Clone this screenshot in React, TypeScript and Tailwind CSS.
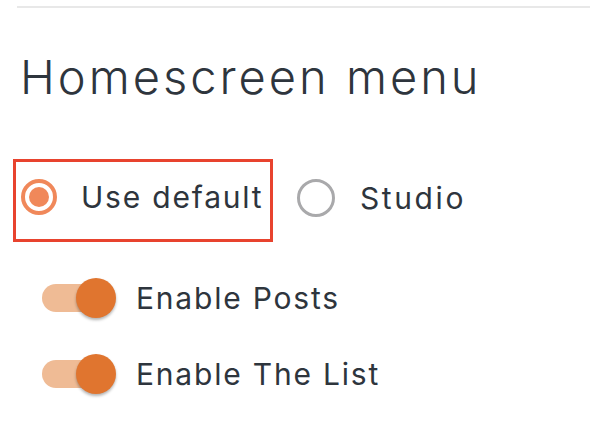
import React from "react";

const font = { fontFamily: "Inter, 'Noto Sans', sans-serif" };

function Toggle({ label }: { label: string }) {
  return (
    <div className="flex items-center h-[40px]">
      <div className="relative w-[74px] h-[40px] shrink-0">
        <div className="absolute left-0 top-[6px] w-[68px] h-[28px] rounded-full bg-[#efbb95]" />
        <div className="absolute right-0 top-0 w-[40px] h-[40px] rounded-full bg-[#e0752f] shadow-[0_2px_3px_rgba(0,0,0,0.3)]" />
      </div>
      <span className="ml-[20px] text-[30px] leading-none text-[#2e353d] tracking-[1.8px]">{label}</span>
    </div>
  );
}

export default function App() {
  return (
    <div className="w-[590px] h-[448px] bg-white overflow-hidden" style={font}>
      <div className="ml-[17px] pt-[6px]">
        <div className="h-[2px] bg-[#e8e8e8]" />
      </div>
      <h2 className="ml-[20px] mt-[43px] text-[47px] leading-[52px] font-light tracking-[3px] text-[#2e353d]">
        Homescreen menu
      </h2>
      <div className="flex items-center ml-[13px] mt-[56px]">
        <label className="flex items-center w-[260px] h-[83px] border-[3px] border-[#e8432e] pl-[5px] pb-[8px]">
          <span className="w-[36px] h-[36px] rounded-full border-[4px] border-[#f0885a] flex items-center justify-center shrink-0">
            <span className="w-[20px] h-[20px] rounded-full bg-[#f0885a]" />
          </span>
          <span className="ml-[24px] text-[30px] leading-none tracking-[1.8px] text-[#2e353d]">Use default</span>
        </label>
        <label className="flex items-center h-[83px] pb-[6px] ml-[24px]">
          <span className="w-[38px] h-[38px] rounded-full border-[3px] border-[#a9a9ab] shrink-0" />
          <span className="ml-[25px] text-[30px] leading-none tracking-[2.6px] text-[#2e353d]">Studio</span>
        </label>
      </div>
      <div className="ml-[42px] mt-[36px] flex flex-col gap-[36px]">
        <Toggle label="Enable Posts" />
        <Toggle label="Enable The List" />
      </div>
    </div>
  );
}
